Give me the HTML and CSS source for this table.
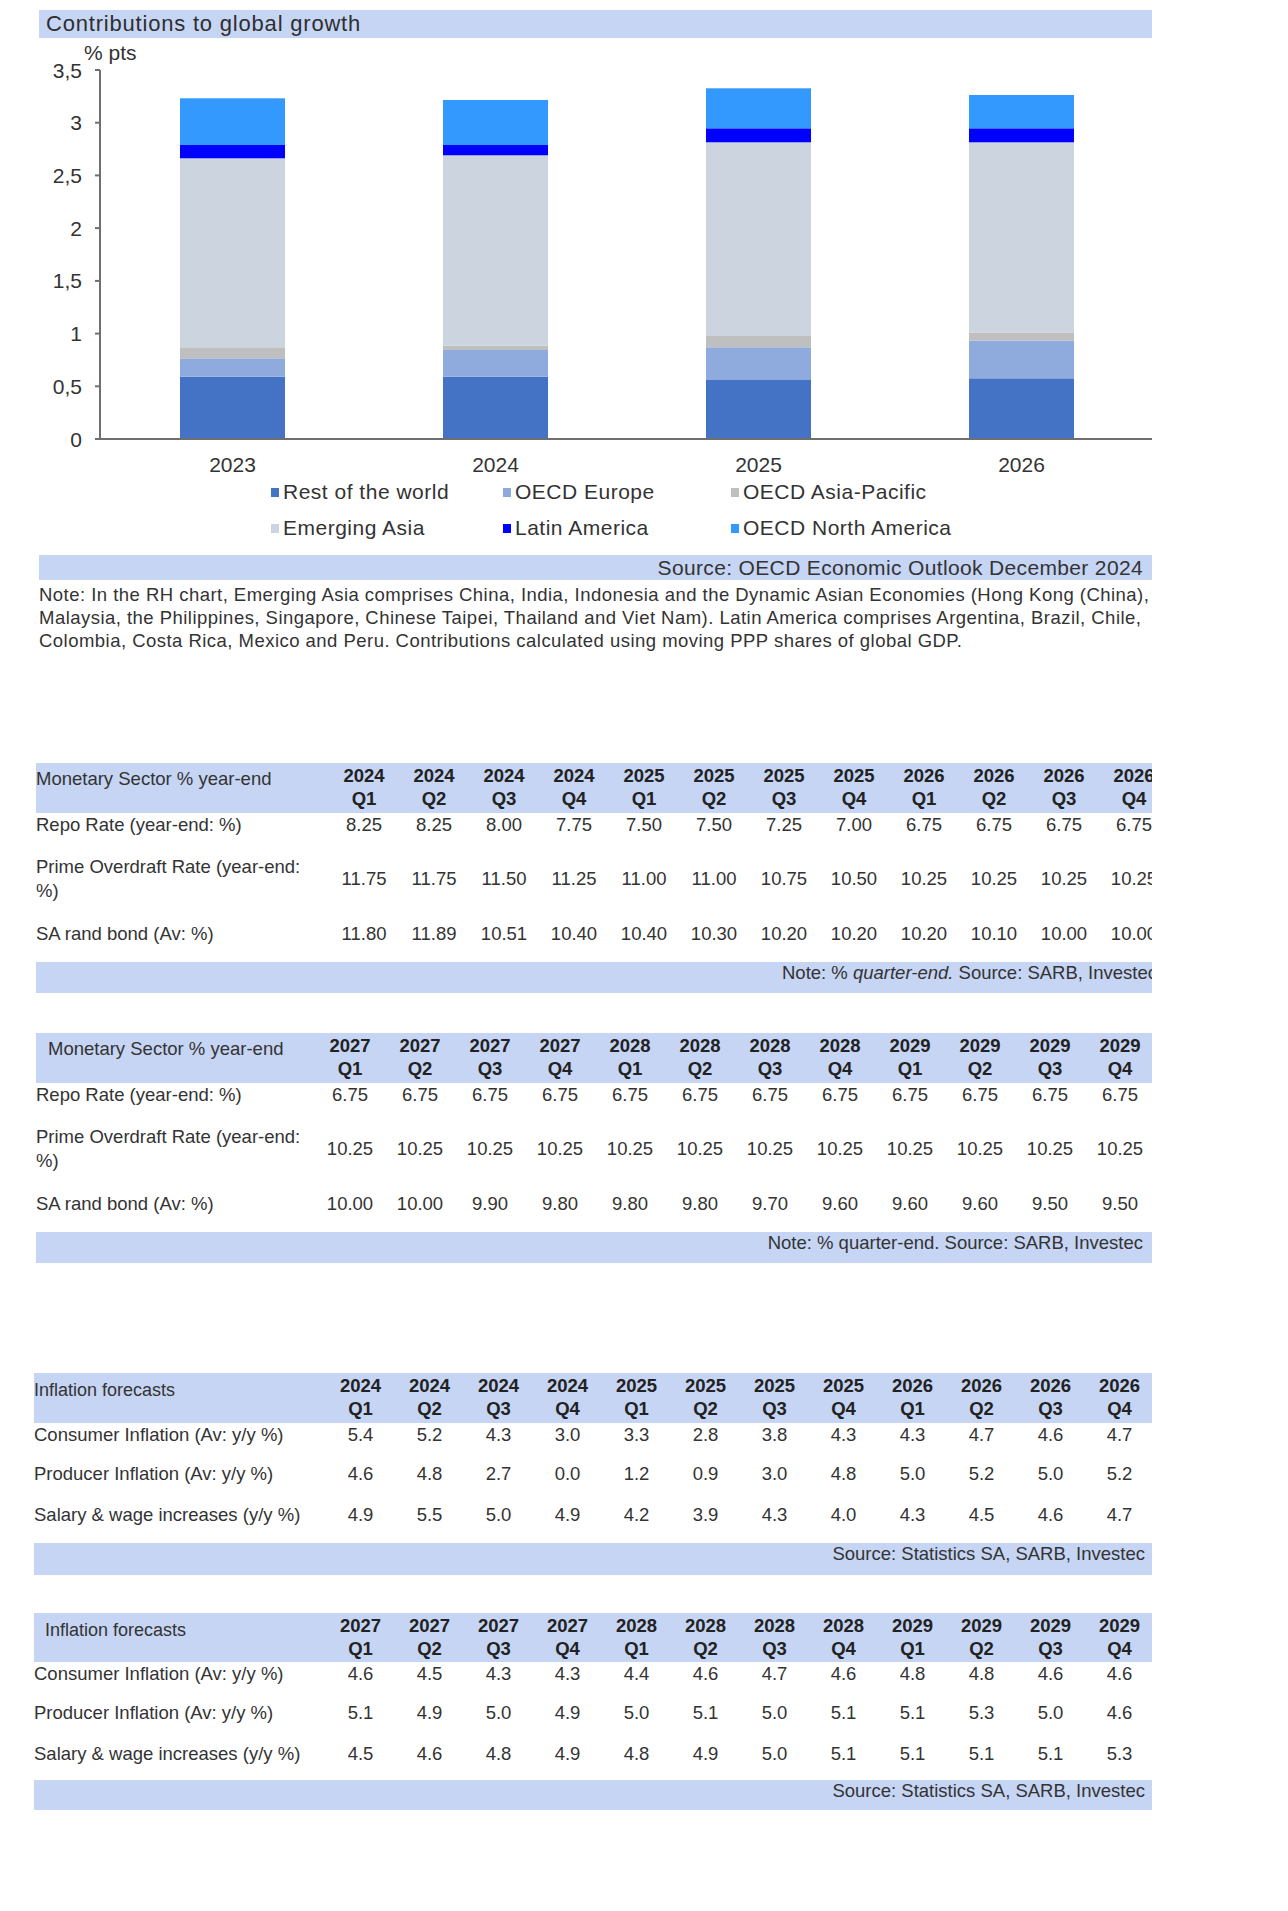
FILE: index.html
```html
<!DOCTYPE html>
<html>
<head>
<meta charset="utf-8">
<link rel="stylesheet" href="styles.css">
</head>
<body>
<div class="page">
  <section class="chart-block">
    <div class="title-bar">Contributions to global growth</div>
    <svg class="chart" width="1113" height="443" viewBox="0 0 1113 443">
      <g>
        <rect x="141" y="338.7" width="105" height="62.3" fill="#4472c4"/>
        <rect x="141" y="320.3" width="105" height="18.4" fill="#8faadc"/>
        <rect x="141" y="309.3" width="105" height="11" fill="#bfbfbf"/>
        <rect x="141" y="120.3" width="105" height="189" fill="#ccd5df"/>
        <rect x="141" y="107" width="105" height="13.3" fill="#0000ff"/>
        <rect x="141" y="60.3" width="105" height="46.7" fill="#3399ff"/>

        <rect x="404" y="338.7" width="105" height="62.3" fill="#4472c4"/>
        <rect x="404" y="312" width="105" height="26.7" fill="#8faadc"/>
        <rect x="404" y="307.7" width="105" height="4.3" fill="#bfbfbf"/>
        <rect x="404" y="117.3" width="105" height="190.4" fill="#ccd5df"/>
        <rect x="404" y="107" width="105" height="10.3" fill="#0000ff"/>
        <rect x="404" y="62" width="105" height="45" fill="#3399ff"/>

        <rect x="667" y="342" width="105" height="59" fill="#4472c4"/>
        <rect x="667" y="309.3" width="105" height="32.7" fill="#8faadc"/>
        <rect x="667" y="298" width="105" height="11.3" fill="#bfbfbf"/>
        <rect x="667" y="104.3" width="105" height="193.7" fill="#ccd5df"/>
        <rect x="667" y="90.3" width="105" height="14" fill="#0000ff"/>
        <rect x="667" y="50.3" width="105" height="40" fill="#3399ff"/>

        <rect x="930" y="340.3" width="105" height="60.7" fill="#4472c4"/>
        <rect x="930" y="302.7" width="105" height="37.6" fill="#8faadc"/>
        <rect x="930" y="294.7" width="105" height="8" fill="#bfbfbf"/>
        <rect x="930" y="104.3" width="105" height="190.4" fill="#ccd5df"/>
        <rect x="930" y="90.3" width="105" height="14" fill="#0000ff"/>
        <rect x="930" y="57" width="105" height="33.3" fill="#3399ff"/>
      </g>
      <g class="axis">
        <line x1="61" y1="32" x2="61" y2="401"/>
        <line x1="56" y1="401" x2="1113" y2="401"/>
        <line x1="56" y1="32" x2="61" y2="32"/>
        <line x1="56" y1="84.7" x2="61" y2="84.7"/>
        <line x1="56" y1="137.4" x2="61" y2="137.4"/>
        <line x1="56" y1="190.1" x2="61" y2="190.1"/>
        <line x1="56" y1="242.9" x2="61" y2="242.9"/>
        <line x1="56" y1="295.6" x2="61" y2="295.6"/>
        <line x1="56" y1="348.3" x2="61" y2="348.3"/>
      </g>
      <g class="ylabels">
        <text x="43" y="40">3,5</text>
        <text x="43" y="92.2">3</text>
        <text x="43" y="144.9">2,5</text>
        <text x="43" y="197.6">2</text>
        <text x="43" y="250.4">1,5</text>
        <text x="43" y="303.1">1</text>
        <text x="43" y="355.8">0,5</text>
        <text x="43" y="408.5">0</text>
      </g>
      <text class="unit" x="45" y="22">% pts</text>
      <g class="xlabels">
        <text x="193.5" y="434">2023</text>
        <text x="456.5" y="434">2024</text>
        <text x="719.5" y="434">2025</text>
        <text x="982.5" y="434">2026</text>
      </g>
    </svg>
    <div class="legend">
      <div class="legend-item"><span class="swatch sw-row"></span>Rest of the world</div>
      <div class="legend-item"><span class="swatch sw-eur"></span>OECD Europe</div>
      <div class="legend-item"><span class="swatch sw-ap"></span>OECD Asia-Pacific</div>
      <div class="legend-item"><span class="swatch sw-ea"></span>Emerging Asia</div>
      <div class="legend-item"><span class="swatch sw-la"></span>Latin America</div>
      <div class="legend-item"><span class="swatch sw-na"></span>OECD North America</div>
    </div>
    <div class="source-bar">Source: OECD Economic Outlook December 2024</div>
    <p class="note">
      <span class="note-line">Note: In the RH chart, Emerging Asia comprises China, India, Indonesia and the Dynamic Asian Economies (Hong Kong (China),</span>
      <span class="note-line">Malaysia, the Philippines, Singapore, Chinese Taipei, Thailand and Viet Nam). Latin America comprises Argentina, Brazil, Chile,</span>
      <span class="note-line">Colombia, Costa Rica, Mexico and Peru. Contributions calculated using moving PPP shares of global GDP.</span>
    </p>
  </section>

  <section class="tbl-clip mon first">
    <div class="tbl m1">
      <div class="row hdr">
        <div class="lbl">Monetary Sector % year-end</div>
        <div class="q">2024<br>Q1</div><div class="q">2024<br>Q2</div><div class="q">2024<br>Q3</div><div class="q">2024<br>Q4</div>
        <div class="q">2025<br>Q1</div><div class="q">2025<br>Q2</div><div class="q">2025<br>Q3</div><div class="q">2025<br>Q4</div>
        <div class="q">2026<br>Q1</div><div class="q">2026<br>Q2</div><div class="q">2026<br>Q3</div><div class="q">2026<br>Q4</div>
      </div>
      <div class="row body h-repo">
        <div class="lbl">Repo Rate (year-end: %)</div>
        <div class="v">8.25</div><div class="v">8.25</div><div class="v">8.00</div><div class="v">7.75</div>
        <div class="v">7.50</div><div class="v">7.50</div><div class="v">7.25</div><div class="v">7.00</div>
        <div class="v">6.75</div><div class="v">6.75</div><div class="v">6.75</div><div class="v">6.75</div>
      </div>
      <div class="row body h-prime">
        <div class="lbl">Prime Overdraft Rate (year-end:<br>%)</div>
        <div class="v">11.75</div><div class="v">11.75</div><div class="v">11.50</div><div class="v">11.25</div>
        <div class="v">11.00</div><div class="v">11.00</div><div class="v">10.75</div><div class="v">10.50</div>
        <div class="v">10.25</div><div class="v">10.25</div><div class="v">10.25</div><div class="v">10.25</div>
      </div>
      <div class="row body h-sa">
        <div class="lbl">SA rand bond (Av: %)</div>
        <div class="v">11.80</div><div class="v">11.89</div><div class="v">10.51</div><div class="v">10.40</div>
        <div class="v">10.40</div><div class="v">10.30</div><div class="v">10.20</div><div class="v">10.20</div>
        <div class="v">10.20</div><div class="v">10.10</div><div class="v">10.00</div><div class="v">10.00</div>
      </div>
      <div class="foot mon-foot">Note: % <em>quarter-end.</em> Source: SARB, Investec</div>
    </div>
  </section>

  <section class="tbl-clip mon second">
    <div class="tbl m2">
      <div class="row hdr">
        <div class="lbl indent">Monetary Sector % year-end</div>
        <div class="q">2027<br>Q1</div><div class="q">2027<br>Q2</div><div class="q">2027<br>Q3</div><div class="q">2027<br>Q4</div>
        <div class="q">2028<br>Q1</div><div class="q">2028<br>Q2</div><div class="q">2028<br>Q3</div><div class="q">2028<br>Q4</div>
        <div class="q">2029<br>Q1</div><div class="q">2029<br>Q2</div><div class="q">2029<br>Q3</div><div class="q">2029<br>Q4</div>
      </div>
      <div class="row body h-repo">
        <div class="lbl">Repo Rate (year-end: %)</div>
        <div class="v">6.75</div><div class="v">6.75</div><div class="v">6.75</div><div class="v">6.75</div>
        <div class="v">6.75</div><div class="v">6.75</div><div class="v">6.75</div><div class="v">6.75</div>
        <div class="v">6.75</div><div class="v">6.75</div><div class="v">6.75</div><div class="v">6.75</div>
      </div>
      <div class="row body h-prime">
        <div class="lbl">Prime Overdraft Rate (year-end:<br>%)</div>
        <div class="v">10.25</div><div class="v">10.25</div><div class="v">10.25</div><div class="v">10.25</div>
        <div class="v">10.25</div><div class="v">10.25</div><div class="v">10.25</div><div class="v">10.25</div>
        <div class="v">10.25</div><div class="v">10.25</div><div class="v">10.25</div><div class="v">10.25</div>
      </div>
      <div class="row body h-sa">
        <div class="lbl">SA rand bond (Av: %)</div>
        <div class="v">10.00</div><div class="v">10.00</div><div class="v">9.90</div><div class="v">9.80</div>
        <div class="v">9.80</div><div class="v">9.80</div><div class="v">9.70</div><div class="v">9.60</div>
        <div class="v">9.60</div><div class="v">9.60</div><div class="v">9.50</div><div class="v">9.50</div>
      </div>
      <div class="foot mon-foot">Note: % quarter-end. Source: SARB, Investec</div>
    </div>
  </section>

  <section class="tbl-clip inf third">
    <div class="tbl i3">
      <div class="row hdr">
        <div class="lbl">Inflation forecasts</div>
        <div class="q">2024<br>Q1</div><div class="q">2024<br>Q2</div><div class="q">2024<br>Q3</div><div class="q">2024<br>Q4</div>
        <div class="q">2025<br>Q1</div><div class="q">2025<br>Q2</div><div class="q">2025<br>Q3</div><div class="q">2025<br>Q4</div>
        <div class="q">2026<br>Q1</div><div class="q">2026<br>Q2</div><div class="q">2026<br>Q3</div><div class="q">2026<br>Q4</div>
      </div>
      <div class="row body h-c">
        <div class="lbl">Consumer Inflation (Av: y/y %)</div>
        <div class="v">5.4</div><div class="v">5.2</div><div class="v">4.3</div><div class="v">3.0</div>
        <div class="v">3.3</div><div class="v">2.8</div><div class="v">3.8</div><div class="v">4.3</div>
        <div class="v">4.3</div><div class="v">4.7</div><div class="v">4.6</div><div class="v">4.7</div>
      </div>
      <div class="row body h-p">
        <div class="lbl">Producer Inflation (Av: y/y %)</div>
        <div class="v">4.6</div><div class="v">4.8</div><div class="v">2.7</div><div class="v">0.0</div>
        <div class="v">1.2</div><div class="v">0.9</div><div class="v">3.0</div><div class="v">4.8</div>
        <div class="v">5.0</div><div class="v">5.2</div><div class="v">5.0</div><div class="v">5.2</div>
      </div>
      <div class="row body h-s">
        <div class="lbl">Salary &amp; wage increases (y/y %)</div>
        <div class="v">4.9</div><div class="v">5.5</div><div class="v">5.0</div><div class="v">4.9</div>
        <div class="v">4.2</div><div class="v">3.9</div><div class="v">4.3</div><div class="v">4.0</div>
        <div class="v">4.3</div><div class="v">4.5</div><div class="v">4.6</div><div class="v">4.7</div>
      </div>
      <div class="foot inf-foot">Source: Statistics SA, SARB, Investec</div>
    </div>
  </section>

  <section class="tbl-clip inf fourth">
    <div class="tbl i4">
      <div class="row hdr">
        <div class="lbl indent">Inflation forecasts</div>
        <div class="q">2027<br>Q1</div><div class="q">2027<br>Q2</div><div class="q">2027<br>Q3</div><div class="q">2027<br>Q4</div>
        <div class="q">2028<br>Q1</div><div class="q">2028<br>Q2</div><div class="q">2028<br>Q3</div><div class="q">2028<br>Q4</div>
        <div class="q">2029<br>Q1</div><div class="q">2029<br>Q2</div><div class="q">2029<br>Q3</div><div class="q">2029<br>Q4</div>
      </div>
      <div class="row body h-c">
        <div class="lbl">Consumer Inflation (Av: y/y %)</div>
        <div class="v">4.6</div><div class="v">4.5</div><div class="v">4.3</div><div class="v">4.3</div>
        <div class="v">4.4</div><div class="v">4.6</div><div class="v">4.7</div><div class="v">4.6</div>
        <div class="v">4.8</div><div class="v">4.8</div><div class="v">4.6</div><div class="v">4.6</div>
      </div>
      <div class="row body h-p">
        <div class="lbl">Producer Inflation (Av: y/y %)</div>
        <div class="v">5.1</div><div class="v">4.9</div><div class="v">5.0</div><div class="v">4.9</div>
        <div class="v">5.0</div><div class="v">5.1</div><div class="v">5.0</div><div class="v">5.1</div>
        <div class="v">5.1</div><div class="v">5.3</div><div class="v">5.0</div><div class="v">4.6</div>
      </div>
      <div class="row body h-s">
        <div class="lbl">Salary &amp; wage increases (y/y %)</div>
        <div class="v">4.5</div><div class="v">4.6</div><div class="v">4.8</div><div class="v">4.9</div>
        <div class="v">4.8</div><div class="v">4.9</div><div class="v">5.0</div><div class="v">5.1</div>
        <div class="v">5.1</div><div class="v">5.1</div><div class="v">5.1</div><div class="v">5.3</div>
      </div>
      <div class="foot inf-foot">Source: Statistics SA, SARB, Investec</div>
    </div>
  </section>
</div>
</body>
</html>
```

FILE: styles.css
```css
* { box-sizing: border-box; }

body {
  margin: 0;
  background: #ffffff;
  font-family: "Liberation Sans", Arial, sans-serif;
  color: #333333;
}

.page {
  padding-top: 10px;
  padding-bottom: 40px;
}

/* ---------- chart ---------- */
.chart-block {
  margin-left: 39px;
  width: 1113px;
}

.title-bar {
  height: 28px;
  background: #c6d5f4;
  font-size: 22px;
  line-height: 28px;
  padding-left: 7px;
  color: #2e2e2e;
  letter-spacing: 0.8px;
}

.chart {
  display: block;
}

.axis line {
  stroke: #6f6f6f;
  stroke-width: 2;
}

.ylabels text {
  font-family: "Liberation Sans", Arial, sans-serif;
  font-size: 21px;
  fill: #333333;
  text-anchor: end;
}

.unit {
  font-family: "Liberation Sans", Arial, sans-serif;
  font-size: 21px;
  fill: #333333;
}

.xlabels text {
  font-family: "Liberation Sans", Arial, sans-serif;
  font-size: 21px;
  fill: #333333;
  text-anchor: middle;
}

.legend {
  display: grid;
  grid-template-columns: 232px 228px 240px;
  row-gap: 14px;
  margin-left: 232px;
  font-size: 21px;
  line-height: 22px;
  letter-spacing: 0.5px;
}

.legend-item {
  display: flex;
  align-items: center;
  white-space: nowrap;
}

.swatch {
  width: 8px;
  height: 9px;
  margin-right: 4px;
  flex: none;
}

.sw-row { background: #4472c4; }
.sw-eur { background: #8faadc; }
.sw-ap  { background: #bfbfbf; }
.sw-ea  { background: #ccd5df; }
.sw-la  { background: #0000ff; }
.sw-na  { background: #3399ff; }

.source-bar {
  margin-top: 16px;
  height: 25px;
  line-height: 25px;
  background: #c6d5f4;
  text-align: right;
  padding-right: 9px;
  font-size: 21px;
  letter-spacing: 0.35px;
}

.note {
  margin: 3px 0 0;
  width: 1113px;
  font-size: 18.5px;
  line-height: 23px;
  letter-spacing: 0.47px;
}

.note-line {
  display: block;
  white-space: nowrap;
}

/* ---------- tables ---------- */
.tbl-clip {
  overflow: hidden;
}

.tbl-clip.mon {
  margin-left: 36px;
  width: 1116px;
}

.tbl-clip.inf {
  margin-left: 34px;
  width: 1118px;
}

.tbl-clip.first  { margin-top: 111px; }
.tbl-clip.second { margin-top: 40px; }
.tbl-clip.third  { margin-top: 110px; }
.tbl-clip.fourth { margin-top: 38px; }

.tbl {
  font-size: 18.5px;
}

.tbl.m1 { --label: 293px; --col: 70px; width: 1133px; }
.tbl.m2 { --label: 279px; --col: 70px; width: 1119px; }
.tbl.i3, .tbl.i4 { --label: 292px; --col: 69px; width: 1120px; }

.row {
  display: grid;
  grid-template-columns: var(--label) repeat(12, var(--col));
}

.hdr {
  background: #c6d5f4;
  height: 50px;
}

.hdr .lbl {
  padding-top: 4px;
  line-height: 23px;
  white-space: nowrap;
  color: #333333;
}

.i3 .hdr .lbl, .i4 .hdr .lbl {
  padding-top: 6px;
  font-size: 18px;
}

.hdr .lbl.indent {
  padding-left: 12px;
}

.i4 .hdr .lbl.indent {
  padding-left: 11px;
}

.hdr .q {
  text-align: center;
  font-weight: bold;
  line-height: 23px;
  padding-top: 1px;
  color: #222222;
  white-space: nowrap;
}

.body {
  align-items: center;
  line-height: 24px;
}

.body .lbl {
  white-space: nowrap;
}

.body .v {
  text-align: center;
  white-space: nowrap;
}

.h-repo  { height: 24px; }
.h-prime { height: 84px; }
.h-sa    { height: 26px; }

.h-c { height: 24px; }
.h-p { height: 54px; }
.h-s { height: 28px; }

.foot {
  background: #c6d5f4;
  line-height: 22px;
  text-align: right;
  white-space: nowrap;
}

.mon-foot {
  margin-top: 15px;
  height: 31px;
  padding-right: 12px;
}

.mon-foot em {
  font-style: italic;
}

.inf-foot {
  margin-top: 14px;
  height: 32px;
  padding-right: 9px;
}

.i4 .hdr { height: 49px; }
.i4 .inf-foot {
  margin-top: 12px;
  height: 30px;
}
```
